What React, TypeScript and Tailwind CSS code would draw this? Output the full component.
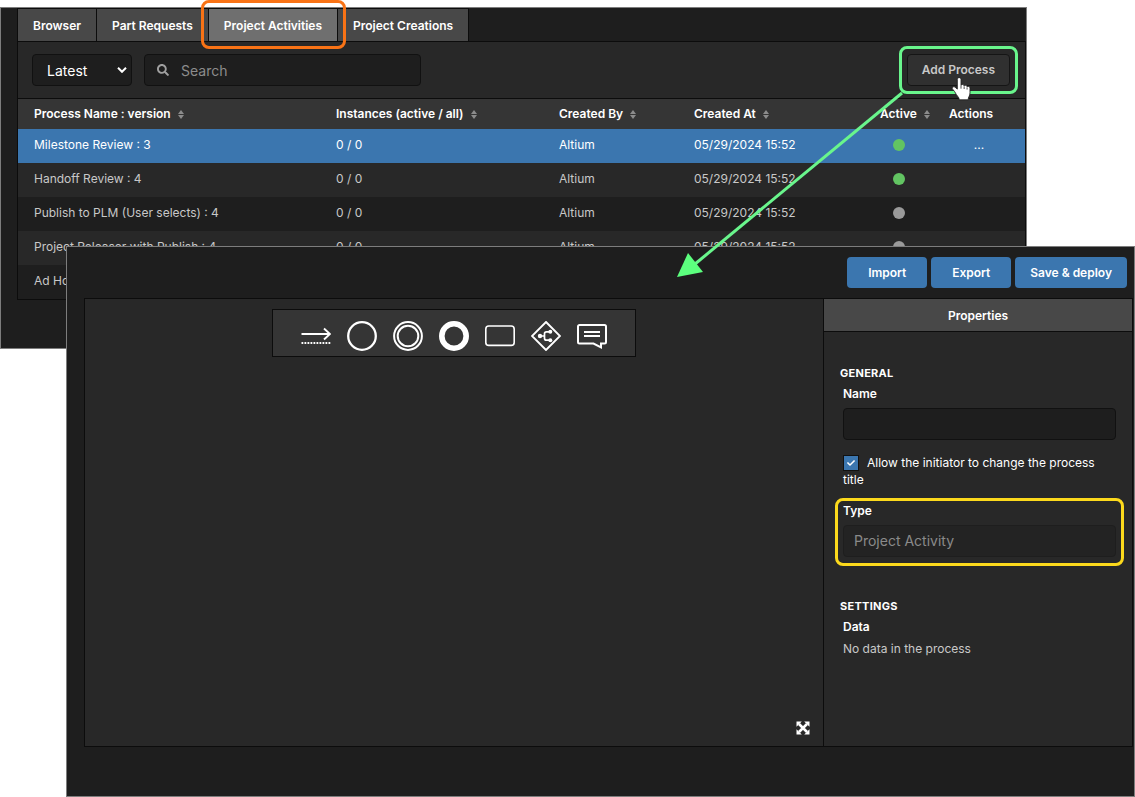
import { useState } from "react";
import type { ReactNode } from "react";
import clsx from "clsx";
import { FaCheck, FaSearch } from "react-icons/fa";

const TABS = ["Browser", "Part Requests", "Project Activities", "Project Creations"];

const PROCESSES = [
  { name: "Milestone Review : 3", active: true },
  { name: "Handoff Review : 4", active: true },
  { name: "Publish to PLM (User selects) : 4", active: false },
  { name: "Project Releaser with Publish : 4", active: false },
  { name: "Ad Hoc Activity : 4", active: false },
];

const PALETTE: { label: string; icon: ReactNode }[] = [
  {
    label: "Sequence flow",
    icon: (
      <>
        <path d="M0.5 13H29M23 7.500l6 5.500-6 5.500" strokeWidth="1.9" />
        <path d="M0.5 22H30" strokeWidth="1.8" strokeDasharray="1.8 1.2" />
      </>
    ),
  },
  { label: "Start event", icon: <circle cx="15" cy="15" r="13.8" strokeWidth="2.300" /> },
  {
    label: "Intermediate event",
    icon: (
      <>
        <circle cx="15" cy="15" r="13.9" strokeWidth="2" />
        <circle cx="15" cy="15" r="10.3" strokeWidth="2" />
      </>
    ),
  },
  { label: "End event", icon: <circle cx="15" cy="15" r="12.2" strokeWidth="5.6" /> },
  { label: "Task", icon: <rect x="0.8" y="5" width="28.4" height="19.4" rx="3" strokeWidth="1.6" /> },
  {
    label: "Gateway",
    icon: (
      <>
        <path d="M15 1 29 15 15 29 1 15Z" strokeWidth="1.9" />
        <path d="M9 15h4M19 10.8h-3.5q-2 0-2 2v4.4q0 2 2 2H19" strokeWidth="1.7" />
        <g fill="currentColor" stroke="none">
          <circle cx="9" cy="15" r="2.2" />
          <circle cx="19.3" cy="10.8" r="2" />
          <circle cx="19.3" cy="19.2" r="2" />
        </g>
      </>
    ),
  },
  {
    label: "Comment",
    icon: (
      <>
        <path
          d="M2.500 4h25a1.500 1.500 0 0 1 1.500 1.500v15.500a1.500 1.500 0 0 1-1.500 1.500H24v3.800l-7.500-3.800h-14A1.500 1.500 0 0 1 1 21V5.500A1.500 1.500 0 0 1 2.500 4Z"
          strokeWidth="2"
        />
        <path d="M7 11h16M7 15h16" strokeWidth="1.9" />
      </>
    ),
  },
];

function HeaderCell({ children, sortable = true }: { children: ReactNode; sortable?: boolean }) {
  return (
    <th className="pl-4 text-left font-semibold whitespace-nowrap text-white">
      {children}
      {sortable && (
        <svg viewBox="0 0 6 9" className="ml-[7px] inline h-[9px] w-1.5 align-[-1px]" aria-hidden="true">
          <path d="M3 0 6 4H0ZM3 9 0 5h6Z" fill="#8c8c8c" />
        </svg>
      )}
    </th>
  );
}

function HandCursor() {
  return (
    <svg
      viewBox="0 0 20 24"
      className="pointer-events-none absolute top-[22px] left-[43px] z-30 h-[26px] w-[22px]"
      aria-hidden="true"
    >
      <path
        d="M8.300 1.500c1 0 1.700.7 1.700 1.700v5.300c.3-.5.8-.7 1.300-.7.8 0 1.300.5 1.500 1.200.3-.3.7-.4 1.200-.4.800 0 1.400.5 1.500 1.200.3-.2.6-.3 1-.3 1.100 0 1.800.8 1.800 1.800v4.200c0 1.500-.4 2.600-1 3.700-.4.800-.6 1.400-.6 2.300v.5H8.200v-1c0-.6-.3-1-.7-1.500-1.500-1.700-2.300-3.200-3.300-5-.5-1-1.200-1.500-1.900-2.200-.6-.6-.5-1.500.1-2 .7-.5 1.500-.4 2.200.1l2 1.700V3.200c0-1 .7-1.700 1.700-1.700Z"
        fill="#fff"
        stroke="#222"
        strokeWidth="0.8"
      />
      <path d="M10 8.500v3.200M12.900 9.500v2.500M15.600 10.500v2" stroke="#333" strokeWidth="0.8" />
    </svg>
  );
}

function ProcessList() {
  const [tab, setTab] = useState("Project Activities");

  return (
    <section className="mt-[7px] mr-[108px] border border-[#7d7d7d] bg-[#1e1e1e] pb-12 pl-4">
      <nav className="flex border-b border-[#0c0c0c]">
        {TABS.map((name, i) => (
          <div key={name} className="relative">
            <button
              type="button"
              onClick={() => setTab(name)}
              className={clsx(
                "h-[33px] border-t border-r border-[#0c0c0c] px-[15px] pt-0.5 font-semibold text-white",
                i === 0 && "border-l",
                tab === name ? "bg-[#6f6f6f]" : "bg-[#484848]"
              )}
            >
              {name}
            </button>
            {name === "Project Activities" && (
              <div className="pointer-events-none absolute -inset-2 z-10 rounded-lg border-3 border-[#f97316]" />
            )}
          </div>
        ))}
      </nav>

      <div className="border-x border-b border-[#0c0c0c]">
        <div className="flex items-center gap-3 bg-[#282828] py-3 pr-[15px] pl-3.5">
          <div className="relative">
            <select
              aria-label="Version"
              className="h-8 w-[100px] appearance-none rounded border border-[#111] bg-[#1e1e1e] pt-0.5 pl-3.5 text-sm text-white"
            >
              <option>Latest</option>
              <option>All</option>
            </select>
            <svg
              viewBox="0 0 10 6"
              className="pointer-events-none absolute top-[13px] right-[5px] h-1.5 w-2.5"
              fill="none"
              stroke="#fff"
              strokeWidth="2"
              aria-hidden="true"
            >
              <path d="M1 0.800 5 4.800 9 0.800" />
            </svg>
          </div>
          <div className="relative">
            <FaSearch className="absolute top-2.5 left-[13px] h-3 w-3 text-[#a0a0a0]" />
            <input
              type="search"
              aria-label="Search"
              placeholder="Search"
              className="h-8 w-[277px] rounded border border-[#111] bg-[#1e1e1e] pr-3 pl-9 text-sm text-white placeholder:text-[#8c8c8c]"
            />
          </div>
          <div className="relative ml-auto">
            <button
              type="button"
              className="h-8 rounded border border-[#151515] bg-[#303030] px-[14px] font-semibold text-[#c8c8c8]"
            >
              Add Process
            </button>
            <div className="pointer-events-none absolute -inset-2 z-20 rounded-lg border-3 border-[#69f58c]" />
            {/* call-out line from the button down to the editor */}
            <svg
              width="230"
              height="192"
              viewBox="0 0 230 192"
              className="pointer-events-none absolute top-9 right-[103px] z-20"
              aria-hidden="true"
            >
              <path d="M225 3 18 174" stroke="#69f58c" strokeWidth="3" fill="none" />
              <path d="M0 187 11 163 26 182Z" fill="#5cff7e" />
            </svg>
            <HandCursor />
          </div>
        </div>

        <table className="w-full table-fixed border-collapse text-[#c8c8c8]">
          <colgroup>
            <col />
            <col className="w-[223px]" />
            <col className="w-[135px]" />
            <col className="w-[186px]" />
            <col className="w-[69px]" />
            <col className="w-[92px]" />
          </colgroup>
          <thead>
            <tr className="h-[30px] border-t border-[#0c0c0c] bg-[#353535]">
              <HeaderCell>Process Name : version</HeaderCell>
              <HeaderCell>Instances (active / all)</HeaderCell>
              <HeaderCell>Created By</HeaderCell>
              <HeaderCell>Created At</HeaderCell>
              <HeaderCell>Active</HeaderCell>
              <HeaderCell sortable={false}>Actions</HeaderCell>
            </tr>
          </thead>
          <tbody>
            {PROCESSES.map((process, i) => (
              <tr
                key={process.name}
                className={clsx(
                  "h-[34px]",
                  i === 0 ? "bg-[#3b76af] text-white" : i % 2 ? "bg-[#282828]" : "bg-[#1e1e1e]"
                )}
              >
                <td className="pb-0.5 pl-4 whitespace-nowrap">{process.name}</td>
                <td className="pb-0.5 pl-4">0 / 0</td>
                <td className="pb-0.5 pl-4">Altium</td>
                <td className="pb-0.5 pl-4">05/29/2024 15:52</td>
                <td className="pb-0.5">
                  <span
                    className={clsx(
                      "mx-auto block h-3 w-3 rounded-full",
                      process.active ? "bg-[#62c462]" : "bg-[#9a9a9a]"
                    )}
                  />
                </td>
                <td className="pb-0.5 text-center">{i === 0 && "..."}</td>
              </tr>
            ))}
          </tbody>
        </table>
      </div>
    </section>
  );
}

function Properties() {
  const [allow, setAllow] = useState(true);

  return (
    <aside className="w-[309px] shrink-0 border-l border-[#0c0c0c]">
      <h2 className="flex h-[33px] items-center justify-center border-b border-[#0c0c0c] bg-[#484848] pt-0.5 font-semibold text-white">
        Properties
      </h2>
      <div className="px-4 pt-[33px] leading-4">
        <h3 className="text-[11px] leading-4 font-bold tracking-wide text-white">GENERAL</h3>
        <div className="mt-[5px] pl-[3px]">
          <label htmlFor="process-name" className="block font-semibold text-white">
            Name
          </label>
          <input
            id="process-name"
            type="text"
            className="mt-1.5 block h-8 w-full rounded border border-[#111] bg-[#1e1e1e] px-2.5 text-sm text-white"
          />
          <label className="mt-3.5 block leading-[17px] text-white">
            <span className="relative mr-2 inline-block h-4 w-4 align-[-4px]">
              <input
                type="checkbox"
                checked={allow}
                onChange={(e) => setAllow(e.target.checked)}
                className="block h-4 w-4 appearance-none border border-[#111] bg-[#1e1e1e] checked:bg-[#3b76af]"
              />
              {allow && (
                <FaCheck className="pointer-events-none absolute top-1 left-1 h-2 w-2 text-white" />
              )}
            </span>
            Allow the initiator to change the process title
          </label>
          <div className="relative mt-[15px]">
            <label htmlFor="process-type" className="block font-semibold text-white">
              Type
            </label>
            <input
              id="process-type"
              type="text"
              value="Project Activity"
              disabled
              className="mt-1.5 block h-8 w-full rounded border border-[#1e1e1e] bg-[#232323] px-2.5 text-sm text-[#8a8a8a]"
            />
            <div className="pointer-events-none absolute -inset-x-2 -top-[5px] -bottom-[9px] rounded-lg border-3 border-[#fcd91c]" />
          </div>
        </div>
        <h3 className="mt-[41px] text-[11px] leading-4 font-bold tracking-wide text-white">SETTINGS</h3>
        <div className="mt-[5px] pl-[3px]">
          <h4 className="font-semibold text-white">Data</h4>
          <p className="mt-1.5 text-[#c8c8c8]">No data in the process</p>
        </div>
      </div>
    </aside>
  );
}

function ProcessEditor() {
  return (
    <section className="relative z-10 -mt-[103px] ml-[66px] flex flex-1 flex-col border border-[#7d7d7d] bg-[#1e1e1e] pb-[49px] pl-[17px]">
      <div className="flex justify-end gap-1 pt-2.5 pr-[7px] pb-2.5">
        {["Import", "Export", "Save & deploy"].map((label) => (
          <button
            key={label}
            type="button"
            className="h-[31px] min-w-20 rounded bg-[#3b76af] px-[15px] pt-0.5 font-semibold text-white"
          >
            {label}
          </button>
        ))}
      </div>
      <div className="mr-px flex flex-1 border border-[#0c0c0c] bg-[#282828]">
        <div className="flex min-w-0 flex-1 flex-col items-center justify-between pt-2.5 pb-[11px]">
          <div className="flex h-12 items-center gap-4 border border-[#0c0c0c] bg-[#353535] px-7 pt-1.5">
            {PALETTE.map((item) => (
              <button key={item.label} type="button" aria-label={item.label} className="text-white">
                <svg viewBox="0 0 30 30" className="h-[30px] w-[30px]" fill="none" stroke="currentColor">
                  {item.icon}
                </svg>
              </button>
            ))}
          </div>
          <button type="button" aria-label="Fit to screen" className="mr-[13px] self-end text-white">
            <svg viewBox="0 0 14 14" className="h-3.5 w-3.5" aria-hidden="true">
              <path d="M3 3 11 11M11 3 3 11" stroke="currentColor" strokeWidth="2.600" />
              <path
                d="M.5.5h5.300L.5 5.800ZM13.500.5v5.300L8.200.5ZM.5 13.500V8.200l5.300 5.300ZM13.500 13.500H8.200l5.300-5.300Z"
                fill="currentColor"
              />
            </svg>
          </button>
        </div>
        <Properties />
      </div>
    </section>
  );
}

export default function App() {
  return (
    <main className="flex min-h-screen flex-col bg-white font-['Inter',sans-serif] text-xs">
      <ProcessList />
      <ProcessEditor />
    </main>
  );
}
